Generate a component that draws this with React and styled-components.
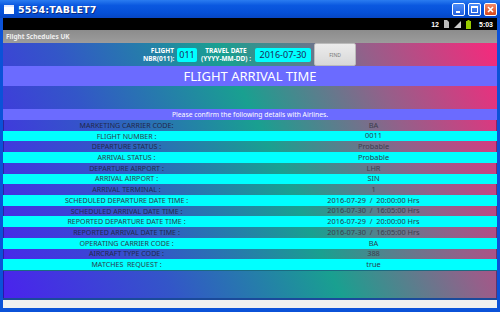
import React from 'react';
import styled, { createGlobalStyle } from 'styled-components';

const Global = createGlobalStyle`
  html, body { margin:0; padding:0; background:#0a4fd6; }
  body { width:500px; height:312px; overflow:hidden; font-family:"Noto Sans", "Open Sans", sans-serif; }
`;

const Win = styled.div`
  width:500px;
  height:312px;
  display:flex;
  flex-direction:column;
  background:#0b52d8;
`;

const TitleBar = styled.div`
  height:18px;
  display:flex;
  align-items:center;
  padding:0 3px 0 4px;
  background:linear-gradient(#2a7cf0 0%, #0a58e0 30%, #0550d8 70%, #0646c4 100%);
  color:#fff;
  font-family:"DejaVu Sans", sans-serif;
  font-weight:bold;
  font-size:9.5px;
  letter-spacing:0.2px;
`;

const AppIcon = styled.div`
  width:10px;
  height:7px;
  background:#fff;
  border-top:2px solid #dfe8ff;
  margin-right:4px;
`;

const Title = styled.span`
  flex:1;
  text-shadow:1px 1px 0 #0a2a80;
`;

const WinBtn = styled.div`
  width:13px;
  height:13px;
  margin-left:3px;
  border:1px solid #fff;
  border-radius:2px;
  box-sizing:border-box;
  background:${p => (p.close ? 'linear-gradient(#f08a6a, #d8461a)' : 'linear-gradient(#4a8cf8, #2460e0)')};
  display:flex;
  align-items:center;
  justify-content:center;
`;

const Frame = styled.div`
  flex:1;
  display:flex;
  flex-direction:column;
  margin:0 3px 4px 3px;
  background:#f0f0f0;
`;

const StatusBar = styled.div`
  height:12px;
  background:#000;
  display:flex;
  align-items:center;
  justify-content:flex-end;
  gap:5px;
  padding-right:4px;
  color:#fff;
  font-family:"Liberation Sans", sans-serif;
  font-size:7px;
  font-weight:bold;
`;

const ActionBar = styled.div`
  height:13px;
  background:linear-gradient(#8c8c8c, #9c9c9c);
  display:flex;
  align-items:center;
  padding-left:3px;
  color:#eeeeee;
  font-size:6.5px;
  font-weight:bold;
`;

const Content = styled.div`
  height:257px;
  display:flex;
  flex-direction:column;
  background:linear-gradient(64deg, #4b22ee 0%, #3356c8 28%, #19a090 55%, #94608a 78%, #f8287c 100%);
`;

const FormRow = styled.div`
  height:23px;
  display:flex;
  align-items:center;
  padding-left:140px;
`;

const FieldLabel = styled.div`
  color:#fff;
  font-size:6.5px;
  font-weight:bold;
  line-height:8px;
  text-align:${p => p.align || 'right'};
  width:${p => p.w}px;
  margin-right:3px;
`;

const Field = styled.div`
  height:14px;
  width:${p => p.w}px;
  background:#00ffff;
  border-radius:2px;
  color:#1a2a5a;
  font-size:9px;
  display:flex;
  align-items:center;
  justify-content:center;
  margin-right:3px;
`;

const FindBtn = styled.div`
  width:42px;
  height:23px;
  box-sizing:border-box;
  background:linear-gradient(#ececec, #d8d8d8);
  border:1px solid #bbb;
  border-radius:2px;
  color:#777;
  font-size:5px;
  display:flex;
  align-items:center;
  justify-content:center;
`;

const Banner = styled.div`
  height:${p => p.h}px;
  background:#6b6bff;
  color:#fff;
  font-size:${p => p.size}px;
  display:flex;
  align-items:center;
  justify-content:center;
`;

const Gap = styled.div`
  height:${p => p.h}px;
`;

const Table = styled.div`
  height:150px;
  display:grid;
  grid-template-rows:repeat(14, 1fr);
`;

const Row = styled.div`
  display:grid;
  grid-template-columns:1fr 1fr;
  align-items:center;
  background:${p => (p.cyan ? '#00ffff' : 'transparent')};
  box-shadow:${p => (p.cyan ? 'none' : 'inset 1px 0 0 rgba(0,0,40,0.35), inset -1px 0 0 rgba(0,0,40,0.35)')};
  line-height:1;
`;

const Cell = styled.div`
  text-align:center;
  font-size:${p => (p.value ? 7.4 : 7.1)}px;
  color:${p => (p.cyan ? '#2b3d4d' : p.value ? '#3c3c4c' : '#22284a')};
  white-space:pre;
`;

const Footer = styled.div`
  flex:1;
  border-top:1px solid #1a6a80;
  border-bottom:2px solid #1a4a9a;
  box-shadow:inset 1px 0 0 rgba(0,0,60,0.4), inset -1px 0 0 rgba(0,0,60,0.4);
`;

const rows = [
  ['MARKETING CARRIER CODE:', 'BA'],
  ['FLIGHT NUMBER :', '0011'],
  ['DEPARTURE STATUS :', 'Probable'],
  ['ARRIVAL STATUS :', 'Probable'],
  ['DEPARTURE AIRPORT :', 'LHR'],
  ['ARRIVAL AIRPORT :', 'SIN'],
  ['ARRIVAL TERMINAL :', '1'],
  ['SCHEDULED DEPARTURE DATE TIME :', '2016-07-29  /  20:00:00 Hrs'],
  ['SCHEDULED ARRIVAL DATE TIME :', '2016-07-30  /  16:05:00 Hrs'],
  ['REPORTED DEPARTURE DATE TIME :', '2016-07-29  /  20:00:00 Hrs'],
  ['REPORTED ARRIVAL DATE TIME :', '2016-07-30  /  16:05:00 Hrs'],
  ['OPERATING CARRIER CODE :', 'BA'],
  ['AIRCRAFT TYPE CODE :', '388'],
  ['MATCHES  REQUEST :', 'true'],
];

const StatusIcons = () => (
  <>
    <span>12</span>
    <svg width="5" height="8" viewBox="0 0 5 8">
      <path d="M0 0 H3 L5 2 V8 H0 Z" fill="#bbb" />
    </svg>
    <svg width="7" height="7" viewBox="0 0 7 7">
      <path d="M0 7 L7 0 V7 Z" fill="#ccc" />
    </svg>
    <svg width="5" height="9" viewBox="0 0 5 9">
      <rect x="1.5" y="0" width="2" height="1" fill="#9c0" />
      <rect x="0" y="1" width="5" height="8" fill="#99cc00" />
    </svg>
    <span style={{ marginLeft: 3 }}>5:03</span>
  </>
);

export default function App() {
  return (
    <Win>
      <Global />
      <TitleBar>
        <AppIcon />
        <Title>5554:TABLET7</Title>
        <WinBtn>
          <svg width="7" height="7" viewBox="0 0 7 7"><rect x="1" y="5" width="4" height="2" fill="#fff" /></svg>
        </WinBtn>
        <WinBtn>
          <svg width="7" height="7" viewBox="0 0 7 7"><rect x="0.5" y="0.5" width="6" height="6" fill="none" stroke="#fff" /><rect x="0" y="0" width="7" height="2" fill="#fff" /></svg>
        </WinBtn>
        <WinBtn close>
          <svg width="7" height="7" viewBox="0 0 7 7"><path d="M1 1 L6 6 M6 1 L1 6" stroke="#fff" strokeWidth="1.6" /></svg>
        </WinBtn>
      </TitleBar>
      <Frame>
        <StatusBar><StatusIcons /></StatusBar>
        <ActionBar>Flight Schedules UK</ActionBar>
        <Content>
          <FormRow>
            <FieldLabel w={31}>FLIGHT<br />NBR(011):</FieldLabel>
            <Field w={20}>011</Field>
            <FieldLabel w={52} align="center">TRAVEL DATE<br />(YYYY-MM-DD) :</FieldLabel>
            <Field w={56}>2016-07-30</Field>
            <FindBtn>FIND</FindBtn>
          </FormRow>
          <Banner h={20} size={13}>FLIGHT ARRIVAL TIME</Banner>
          <Gap h={23} />
          <Banner h={11} size={6.8}>Please confirm the following details with Airlines.</Banner>
          <Table>
            {rows.map(([label, value], i) => {
              const cyan = i % 2 === 1;
              return (
                <Row key={label} cyan={cyan}>
                  <Cell cyan={cyan}>{label}</Cell>
                  <Cell cyan={cyan} value>{value}</Cell>
                </Row>
              );
            })}
          </Table>
          <Footer />
        </Content>
      </Frame>
    </Win>
  );
}
